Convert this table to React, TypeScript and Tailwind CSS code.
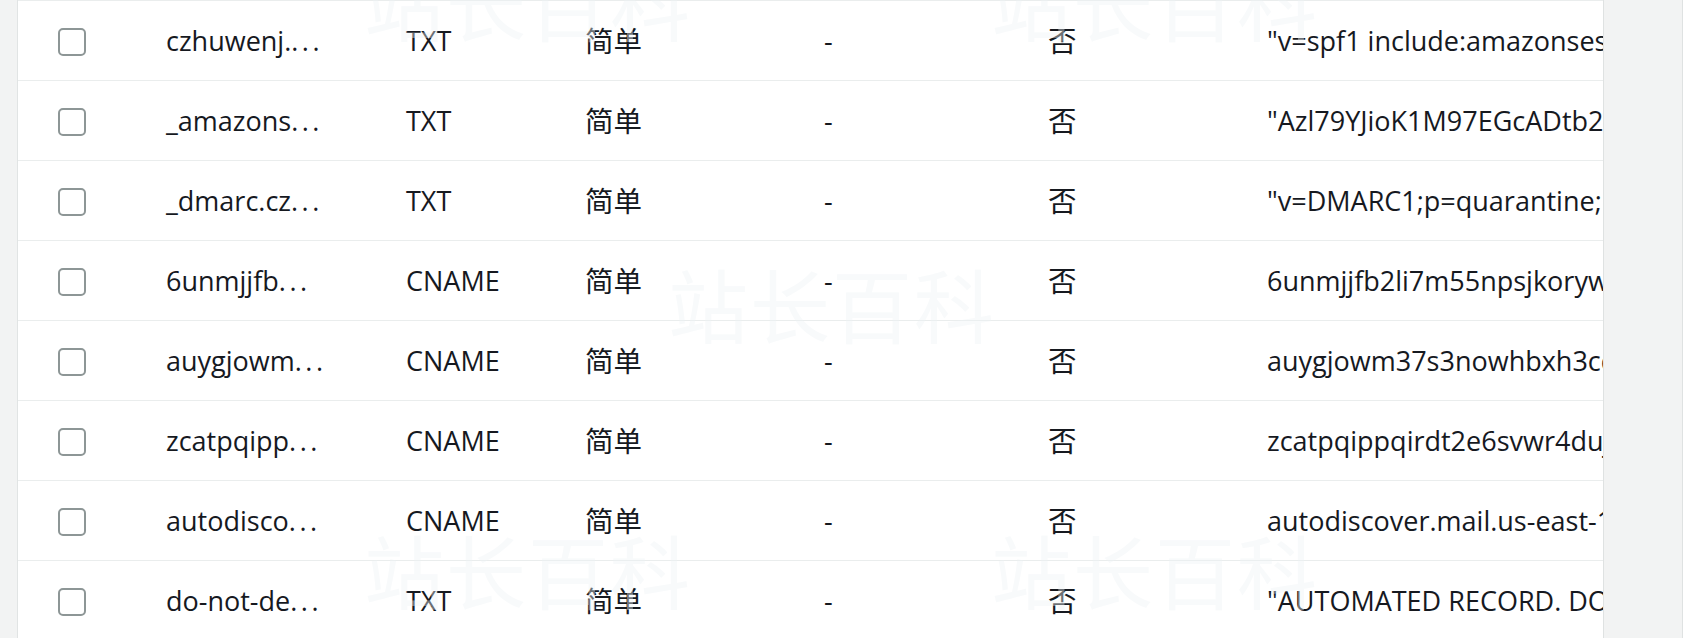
const rows = [
  { name: "czhuwenj.", type: "TXT", value: "\"v=spf1 include:amazonses.com ~all\"" },
  { name: "_amazons", type: "TXT", value: "\"Azl79YJioK1M97EGcADtb2kQ0xWm8vLr5sPnT4uHyE=\"" },
  { name: "_dmarc.cz", type: "TXT", value: "\"v=DMARC1;p=quarantine;pct=100;fo=1\"" },
  { name: "6unmjjfb", type: "CNAME", value: "6unmjjfb2li7m55npsjkorywq4xk2dvh.dkim.amazonses.com" },
  { name: "auygjowm", type: "CNAME", value: "auygjowm37s3nowhbxh3cqz5lkt6e2ra.dkim.amazonses.com" },
  { name: "zcatpqipp", type: "CNAME", value: "zcatpqippqirdt2e6svwr4duj7mhx3bo.dkim.amazonses.com" },
  { name: "autodisco", type: "CNAME", value: "autodiscover.mail.us-east-1.awsapps.com" },
  { name: "do-not-de", type: "TXT", value: "\"AUTOMATED RECORD. DO NOT DELETE.\"" },
];

// faint site watermark that sits over the table
const marks = [
  { pos: "left-[346px] top-[-40px]" },
  { pos: "left-[973px] top-[-40px]" },
  { pos: "left-[650px] top-[262px]" },
  { pos: "left-[346px] top-[528px]" },
  { pos: "left-[973px] top-[528px]" },
];

function Checkbox() {
  return <div className="w-[28px] h-[28px] rounded-[5px] border-2 border-[#8d9696] bg-white" />;
}

export default function App() {
  return (
    <div
      className="flex h-[638px] w-[1696px] overflow-hidden bg-white text-[#16191f]"
      style={{ fontFamily: '"Open Sans", "Noto Sans CJK SC", sans-serif' }}
    >
      {/* left rail */}
      <div className="w-[18px] shrink-0 bg-[#f2f3f3] border-r border-[#e1e4e4]" />

      {/* records table */}
      <div className="relative w-[1585px] shrink-0 overflow-hidden">
        {rows.map((row, i) => (
          <div
            key={i}
            className="flex h-[80px] shrink-0 items-center border-t border-[#eaeded] pl-[40px] text-[27px] leading-normal whitespace-nowrap"
          >
            <div className="w-[108px] shrink-0 mt-[3px]">
              <Checkbox />
            </div>
            <div className="w-[240px] shrink-0 pt-[2px]">
              {row.name}
              <span className="tracking-[3.5px]">...</span>
            </div>
            <div className="w-[179px] shrink-0 pt-[2px]">{row.type}</div>
            <div className="w-[239px] shrink-0 pt-[2px] text-[28.5px]">简单</div>
            <div className="w-[224px] shrink-0 pt-[2px]">-</div>
            <div className="w-[219px] shrink-0 pt-[2px] text-[28.5px]">否</div>
            <div className="min-w-0 flex-1 overflow-hidden pt-[2px]">{row.value}</div>
          </div>
        ))}

        {marks.map((m, i) => (
          <div
            key={i}
            className={`pointer-events-none absolute ${m.pos} text-[80px] leading-none tracking-[2px] text-[#eef3f6] opacity-40`}
            style={{ fontFamily: '"Noto Sans CJK SC", sans-serif' }}
          >
            站长百科
          </div>
        ))}
      </div>

      {/* right side panel */}
      <div className="w-[80px] shrink-0 bg-[#f2f3f3] border-l border-r border-[#dfe2e2]" />
      <div className="flex-1 bg-white" />
    </div>
  );
}
